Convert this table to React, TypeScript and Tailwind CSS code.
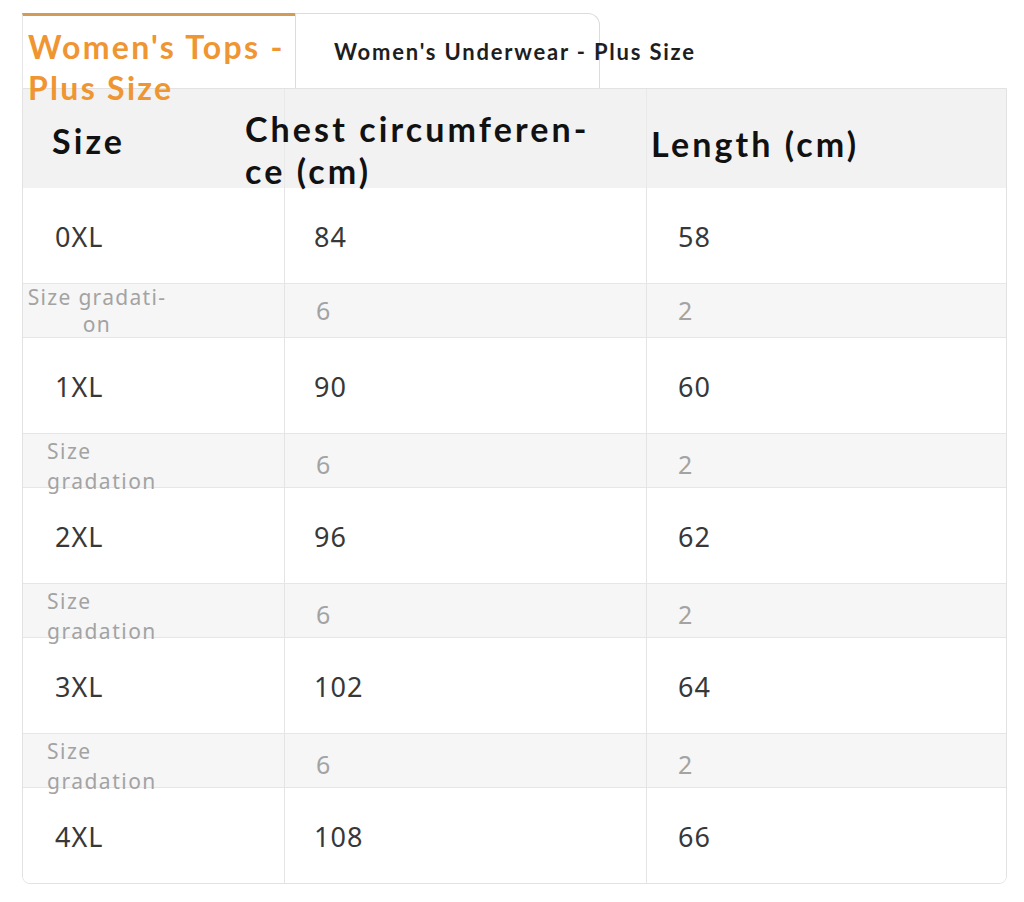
import React from 'react';

type Row = { size: string; chest: string; length: string };

const rows: Row[] = [
  { size: '0XL', chest: '84', length: '58' },
  { size: '1XL', chest: '90', length: '60' },
  { size: '2XL', chest: '96', length: '62' },
  { size: '3XL', chest: '102', length: '64' },
  { size: '4XL', chest: '108', length: '66' },
];

const lato = { fontFamily: 'Lato, "Open Sans", sans-serif' };
const noto = { fontFamily: '"Noto Sans", "Open Sans", sans-serif' };

const SizeRow: React.FC<{ row: Row }> = ({ row }) => (
  <div className="grid grid-cols-[261px_362px_1fr] h-[95px] bg-white text-[27px] tracking-[1px] text-[#383838]" style={noto}>
    <div className="flex items-center pl-[32px] pt-[4px]">{row.size}</div>
    <div className="flex items-center pl-[29px] pt-[4px] border-l border-[#e4e4e4]">{row.chest}</div>
    <div className="flex items-center pl-[31px] pt-[4px] border-l border-[#e4e4e4]">{row.length}</div>
  </div>
);

const GradationRow: React.FC<{ first?: boolean }> = ({ first }) => (
  <div className="grid grid-cols-[261px_362px_1fr] h-[55px] bg-[#f6f6f6] border-y border-[#e6e6e6] text-[#a3a3a3]" style={noto}>
    {first ? (
      <div className="w-[148px] text-center text-[21px] leading-[27px] tracking-[1.3px] whitespace-nowrap">
        Size gradati-
        <br />
        on
      </div>
    ) : (
      <div className="flex flex-col justify-center pl-[24px] pt-[2px] text-[21px] leading-[30px] tracking-[1.5px]">
        <span>Size</span>
        <span>gradation</span>
      </div>
    )}
    <div className="flex items-center pl-[31px] text-[25px] border-l border-[#e4e4e4]">6</div>
    <div className="flex items-center pl-[31px] text-[25px] border-l border-[#e4e4e4]">2</div>
  </div>
);

export default function App() {
  return (
    <div className="min-h-[902px] w-[1024px] bg-white pt-[13px]">
      {/* Tabs */}
      <div className="flex ml-[22px] h-[75px]">
        <div
          className="relative z-10 w-[273px] h-[75px] bg-white border-t-[3px] border-[#d29c56] border-l border-l-[#e6e6e6] pl-[5px] pt-[10px] text-[32px] font-bold leading-[41px] tracking-[2.3px] text-[#ef9532]"
          style={lato}
        >
          Women's Tops -
          <br />
          Plus Size
        </div>
        <div
          className="relative w-[305px] h-[75px] bg-white border border-b-0 border-[#dcdcdc] rounded-tr-[12px] pl-[38px] flex items-center whitespace-nowrap text-[22px] font-bold tracking-[1.8px] text-[#1e1e1e]"
          style={lato}
        >
          Women's Underwear - Plus Size
        </div>
      </div>

      {/* Table */}
      <div className="ml-[22px] w-[985px] border border-[#e2e2e2] rounded-b-[8px] overflow-hidden">
        <div
          className="grid grid-cols-[261px_362px_1fr] h-[99px] bg-[#f2f2f2] text-[34px] font-bold tracking-[3.1px] text-[#111]"
          style={lato}
        >
          <div className="flex items-center pl-[29px]">Size</div>
          <div className="border-l border-[#e9e9e9]">
            <div className="relative z-10 -ml-[40px] pt-[19px] leading-[42px] whitespace-nowrap">
              Chest circumferen-
              <br />
              ce (cm)
            </div>
          </div>
          <div className="flex items-center pl-[4px] pt-[6px] border-l border-[#e9e9e9]">Length (cm)</div>
        </div>
        {rows.map((row, i) => (
          <React.Fragment key={row.size}>
            <SizeRow row={row} />
            {i < rows.length - 1 && <GradationRow first={i === 0} />}
          </React.Fragment>
        ))}
      </div>
    </div>
  );
}
